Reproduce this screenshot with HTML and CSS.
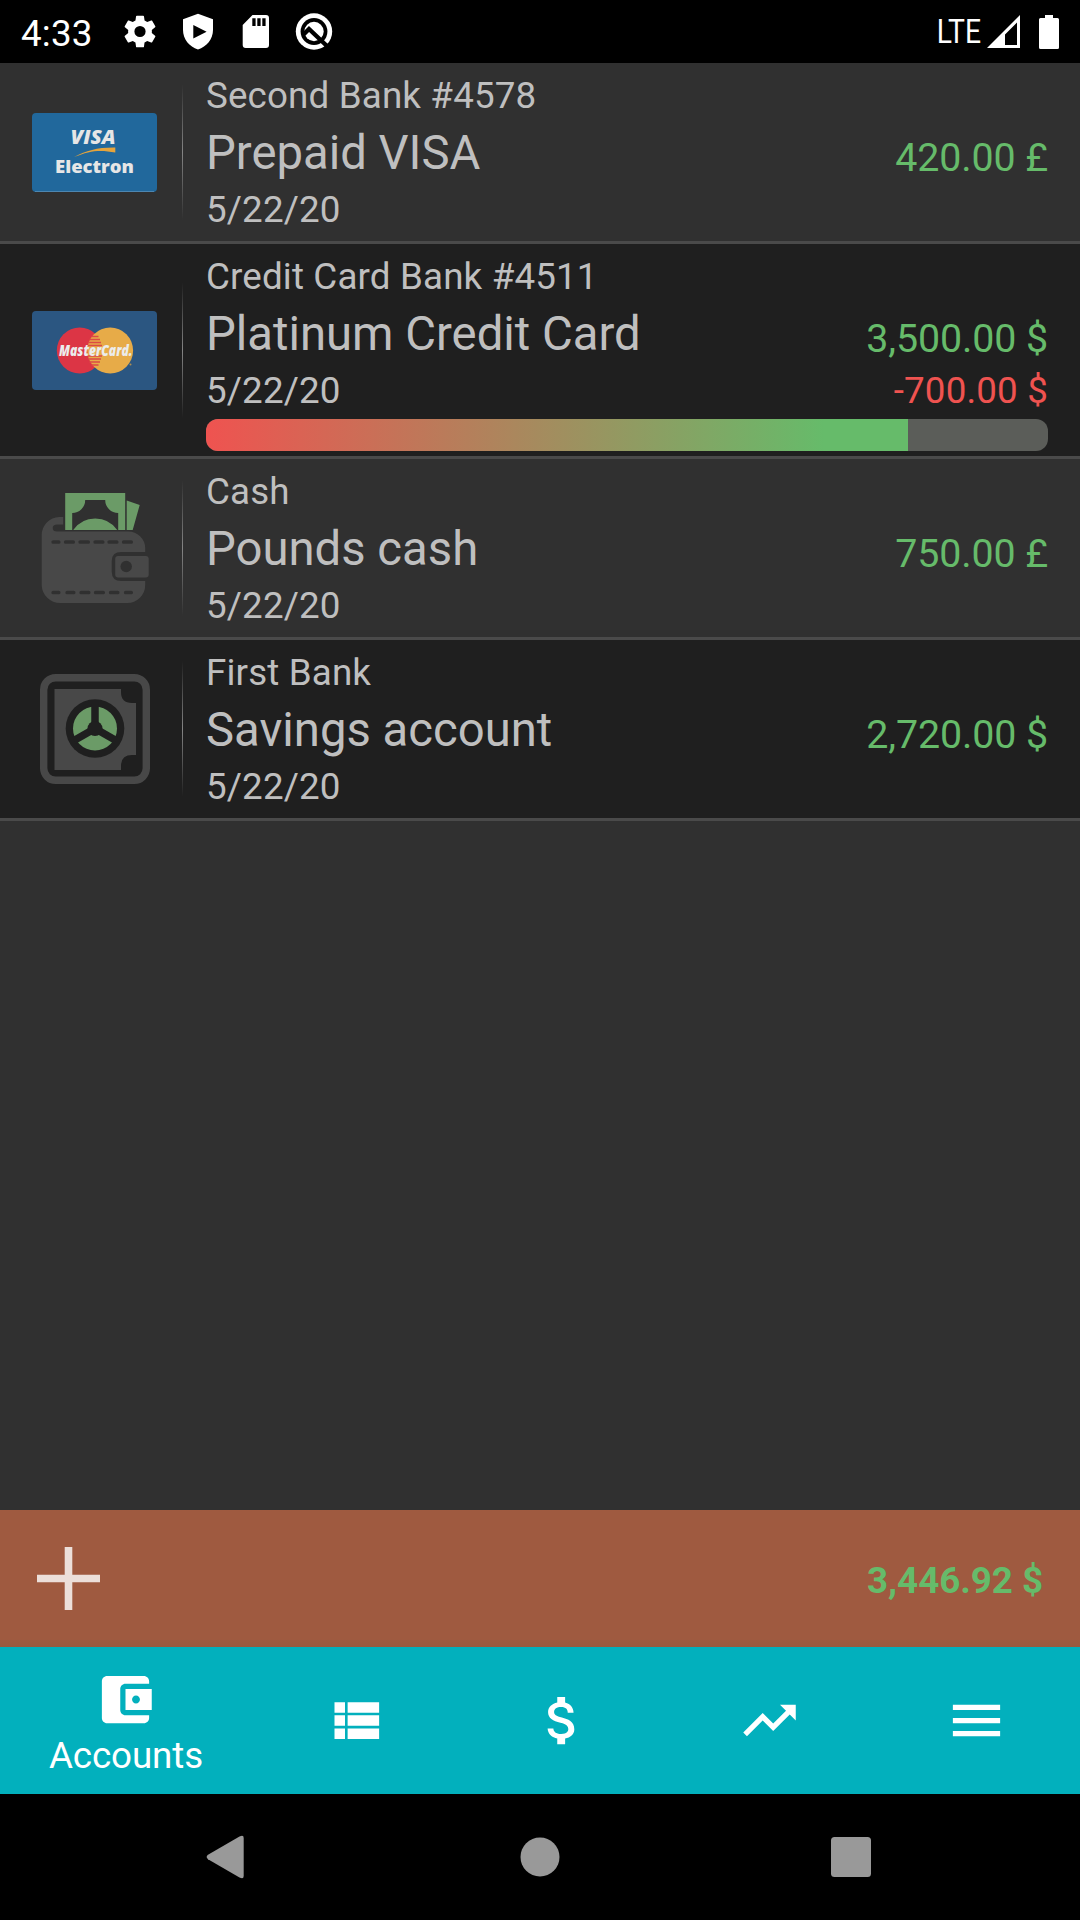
FILE: index.html
```html
<!DOCTYPE html>
<html lang="en">
<head>
<meta charset="utf-8">
<title>Accounts</title>
<link rel="stylesheet" href="styles.css">
</head>
<body>
<div class="screen">
  <header class="status">
    <span class="clock">4:33</span>
    <div class="status-icons">
      <svg viewBox="0 0 40 39"><path transform="translate(.2 -.3) scale(1.65)" d="M19.14 12.94c.04-.3.06-.61.06-.94 0-.32-.02-.64-.07-.94l2.03-1.58c.18-.14.23-.41.12-.61l-1.92-3.32c-.12-.22-.37-.29-.59-.22l-2.39.96c-.5-.38-1.03-.7-1.62-.94l-.36-2.54c-.04-.24-.24-.41-.48-.41h-3.84c-.24 0-.43.17-.47.41l-.36 2.54c-.59.24-1.13.57-1.62.94l-2.39-.96c-.22-.08-.47 0-.59.22L2.74 8.87c-.12.21-.08.47.12.61l2.03 1.58c-.05.3-.09.63-.09.94s.02.64.07.94l-2.03 1.58c-.18.14-.23.41-.12.61l1.92 3.32c.12.22.37.29.59.22l2.39-.96c.5.38 1.03.7 1.62.94l.36 2.54c.05.24.24.41.48.41h3.84c.24 0 .44-.17.47-.41l.36-2.54c.59-.24 1.13-.56 1.62-.94l2.39.96c.22.08.47 0 .59-.22l1.92-3.32c.12-.22.07-.47-.12-.61l-2.01-1.58zM12 15.4a3.4 3.4 0 1 1 0-6.8 3.4 3.4 0 0 1 0 6.8z"/></svg>
      <svg viewBox="0 0 40 39"><path fill-rule="evenodd" d="M20 1.8 35 7.2V18C35 27 28.600 34.900 20 37.500 11.400 34.900 5 27 5 18V7.200zM15.300 13v13.400L28.600 19.700z"/></svg>
      <svg viewBox="0 0 40 39"><path fill-rule="evenodd" d="M16.500 3H30Q33 3 33 6V33Q33 36 30 36H9.700Q6.700 36 6.700 33V13zM16.300 6.300v7.700h3.300V6.300zm5 0v7.700h3.300V6.300zm5 0v7.700h3.300V6.300z"/></svg>
      <svg viewBox="0 0 40 39"><circle cx="20" cy="19.500" r="18.200"/><circle cx="20" cy="19.500" r="13.400" fill="#000"/><circle cx="20" cy="19.500" r="9.700"/><path d="M9.500 22.500 15 17 33.500 34.500" fill="none" stroke="#000" stroke-width="4.400"/></svg>
    </div>
    <div class="status-right">
      <span class="lte">LTE</span>
      <svg class="signal" viewBox="0 0 33 33"><path fill-rule="evenodd" d="M33 0V33H0zM30 7.500 18 19.500V30H30z"/></svg>
      <svg class="battery" viewBox="0 0 20 34"><path d="M6 0h8v3h4.500q1.500 0 1.500 1.500v28q0 1.500-1.500 1.500h-17Q0 34 0 32.500v-28Q0 3 1.500 3H6z"/></svg>
    </div>
  </header>

  <main class="accounts">
    <article class="account">
      <div class="logo">
        <svg class="card" viewBox="0 0 125 79"><rect width="125" height="79" rx="4" fill="#21689c"/><path d="M3 78.500H122" stroke="#4d86b0" stroke-width="1"/><text class="visa" x="38.500" y="30.700" textLength="45" lengthAdjust="spacingAndGlyphs">VISA</text><path d="M42 44C55 37.500 65 34.300 83.300 34.500V39.500C68 36.500 58 37.500 42 44z" fill="#e5a43c"/><text class="electron" x="23" y="59.700" textLength="79" lengthAdjust="spacingAndGlyphs">Electron</text></svg>
      </div>
      <div class="divider"></div>
      <div class="info">
        <div class="bank">Second Bank #4578</div>
        <div class="name">Prepaid VISA</div><div class="amount">420.00 £</div>
        <div class="date">5/22/20</div>
      </div>
    </article>
    <article class="account">
      <div class="logo">
        <svg class="card" viewBox="0 0 125 79"><rect width="125" height="79" rx="4" fill="#2b5681"/><circle cx="47.700" cy="39.500" r="22.900" fill="#dc3545"/><circle cx="78.200" cy="39.500" r="22.900" fill="#e7ab48"/><path d="M59.500 25.500h7M57.500 28.500h10.500M56.500 31.500h12.500M56 34.500h14M56 45h14M56.500 48h12.500M57.500 51h10.500M59.500 54h7" stroke="#dc4b45" stroke-width="1.500"/><circle cx="98.500" cy="53.500" r="1" fill="#b08f50"/><text class="mc" x="27" y="45" textLength="73.500" lengthAdjust="spacingAndGlyphs">MasterCard.</text></svg>
      </div>
      <div class="divider"></div>
      <div class="info">
        <div class="bank">Credit Card Bank #4511</div>
        <div class="name">Platinum Credit Card</div><div class="amount">3,500.00 $</div>
        <div class="date">5/22/20</div><div class="debt">-700.00 $</div>
        <div class="meter"><div class="meter-fill" style="width: 83.37%"></div></div>
      </div>
    </article>
    <article class="account">
      <div class="logo">
        <svg class="glyph" viewBox="0 0 110 110">
          <g transform="translate(1.200 0)">
          <path fill="#484848" d="M22 24V31.500H16Q11.500 31.500 11.500 35T16 38.500H87A17 17 0 0 1 104 55V59H80Q70.500 59 70.500 68V78.500Q70.500 88 80 88H104V92A18 18 0 0 1 86 110H19A18.500 18.500 0 0 1 .5 92V42A18 18 0 0 1 18 24z"/>
          <path stroke="#303030" stroke-width="3.700" stroke-linecap="round" d="M12 49h5.500M24.500 49h7.500M39 49h8M54 49h7.500M68 49h7.500M82.500 49h7.500M12 99.500h5.500M26 99.500h6.500M40 99.500h7.500M54.500 99.500h7.500M69.500 99.500h7M84.500 99.500h5.500"/>
          <rect x="74" y="63" width="33.500" height="21.500" rx="3" fill="#484848"/><circle cx="85" cy="73.500" r="5.700" fill="#303030"/>
          <path fill="#6b9b67" fill-rule="evenodd" d="M24 0H84V37H24zM44 7A13 13 0 0 1 31 20V37H32Q40 25.500 54 25.500T76 37H77V20A13 13 0 0 1 64 7zM85.500 7.500 98.500 12 91.500 37H85.500z"/>
          </g>
        </svg>
      </div>
      <div class="divider"></div>
      <div class="info">
        <div class="bank">Cash</div>
        <div class="name">Pounds cash</div><div class="amount">750.00 £</div>
        <div class="date">5/22/20</div>
      </div>
    </article>
    <article class="account">
      <div class="logo">
        <svg class="glyph" viewBox="0 0 110 110">
          <rect x="3.700" y="3.700" width="102.600" height="102.600" rx="12" fill="none" stroke="#484848" stroke-width="7.400"/>
          <path fill="#484848" d="M14.500 15H81V18Q81 29 92 29H96V81H92Q81 81 81 92V96H14.500z"/>
          <circle cx="55" cy="54.500" r="29.300" fill="#1f1f1f"/><circle cx="55" cy="54.500" r="22" fill="#6b9b67"/>
          <path d="M55 54.500V30M55 54.500 34 66.500M55 54.500 76 66.500" stroke="#1f1f1f" stroke-width="7.500"/><circle cx="55" cy="54.500" r="7.500" fill="#1f1f1f"/>
        </svg>
      </div>
      <div class="divider"></div>
      <div class="info">
        <div class="bank">First Bank</div>
        <div class="name">Savings account</div><div class="amount">2,720.00 $</div>
        <div class="date">5/22/20</div>
      </div>
    </article>
  </main>

  <section class="total">
    <svg class="plus" viewBox="0 0 63 63"><path d="M27.700 0h7.600v27.700H63v7.600H35.300V63h-7.600V35.300H0v-7.600h27.700z"/></svg>
    <strong class="total-amount">3,446.92 $</strong>
  </section>

  <nav class="tabs">
    <a class="tab active"><svg viewBox="0 0 24 24"><path d="M21 18v1c0 1.100-.9 2-2 2H5c-1.110 0-2-.9-2-2V5c0-1.100.89-2 2-2h14c1.100 0 2 .9 2 2v1h-9c-1.110 0-2 .9-2 2v8c0 1.100.89 2 2 2h9zm-9-2h10V8H12v8zm4-2.500c-.83 0-1.500-.67-1.500-1.500s.67-1.500 1.500-1.500 1.500.67 1.500 1.500-.67 1.500-1.500 1.500z"/></svg><span>Accounts</span></a>
    <a class="tab"><svg viewBox="0 0 24 24"><path d="M4 14h4v-4H4v4zm0 5h4v-4H4v4zM4 9h4V5H4v4zm5 5h12v-4H9v4zm0 5h12v-4H9v4zM9 5v4h12V5H9z"/></svg></a>
    <a class="tab"><svg viewBox="0 0 24 24"><path d="M11.800 10.900c-2.270-.59-3-1.200-3-2.150 0-1.090 1.010-1.850 2.700-1.850 1.780 0 2.440.85 2.500 2.100h2.210c-.07-1.720-1.120-3.300-3.210-3.810V3h-3v2.160c-1.940.42-3.500 1.680-3.500 3.610 0 2.310 1.910 3.460 4.700 4.130 2.500.6 3 1.480 3 2.410 0 .69-.49 1.790-2.700 1.790-2.060 0-2.870-.92-2.980-2.100h-2.200c.12 2.190 1.760 3.420 3.680 3.830V21h3v-2.150c1.950-.37 3.500-1.500 3.500-3.550 0-2.840-2.430-3.810-4.700-4.400z"/></svg></a>
    <a class="tab"><svg viewBox="0 0 24 24"><path d="M16 6l2.290 2.290-4.880 4.880-4-4L2 16.590 3.410 18l6-6 4 4 6.300-6.290L22 12V6z"/></svg></a>
    <a class="tab"><svg viewBox="0 0 24 24"><path d="M3 18h18v-2H3v2zm0-5h18v-2H3v2zm0-7v2h18V6H3z"/></svg></a>
  </nav>

  <footer class="system">
    <svg viewBox="0 0 64 64"><path d="M11 29.800 42.500 11.600Q46.700 9.500 46.700 13V51Q46.700 54.500 42.500 52.400L11 34.200Q8.300 32 11 29.800z"/></svg>
    <svg viewBox="0 0 64 64"><circle cx="32" cy="32" r="19.500"/></svg>
    <svg viewBox="0 0 64 64"><rect x="12" y="12" width="40" height="40" rx="3.500"/></svg>
  </footer>
</div>
</body>
</html>
```
FILE: styles.css
```css
* { box-sizing: border-box; }
body { margin: 0; background: #303030; font-family: Roboto, "Liberation Sans", sans-serif; }
svg { display: block; }
.screen { width: 1080px; height: 1920px; display: flex; flex-direction: column; background: #303030; }

.status { height: 63px; flex: none; background: #000; color: #fff; display: flex; align-items: center; padding: 0 21px; }
.status svg { fill: #fff; }
.clock { width: 99px; font-size: 36.75px; line-height: 60px; padding-top: 4px; letter-spacing: .2px; }
.status-icons { display: flex; gap: 18px; }
.status-icons svg { width: 40px; height: 39px; }
.status-right { margin-left: auto; display: flex; align-items: center; }
.lte { font-size: 32.5px; line-height: 61px; padding-top: 1px; transform: scaleX(.87); transform-origin: right; margin-right: 6px; }
.signal { width: 33px; height: 33px; margin-right: 19px; }
.battery { width: 20px; height: 34px; }

.accounts { flex: 1; }
.account { display: flex; align-items: center; min-height: 181px; padding: 0 32px; background: #303030; border-bottom: 3px solid #4a4a4a; }
.account:nth-child(even) { background: #1f1f1f; }
.logo { width: 126px; flex: none; display: flex; justify-content: center; }
.card { width: 125px; height: 79px; margin-right: 1px; }
.glyph { width: 110px; height: 110px; overflow: visible; }
.divider { width: 1px; height: 136px; flex: none; margin: 0 23px 0 24px; background: linear-gradient(transparent, #858585, transparent); }
.info { flex: 1; align-self: stretch; display: grid; grid-template-columns: 1fr auto; align-content: start; padding: 8px 0 5px; color: #bfbfbf; }
.bank { grid-column: 1 / -1; }
.bank, .date, .debt { font-size: 36.75px; line-height: 49px; letter-spacing: .15px; }
.name { font-size: 47.25px; line-height: 63px; padding-top: 2px; }
.amount { font-size: 39.375px; line-height: 55px; padding-top: 10px; letter-spacing: -.1px; color: #66bb6a; }
.debt { color: #ef5350; text-align: right; }
.meter { grid-column: 1 / -1; height: 32px; margin-top: 4px; border-radius: 12px; overflow: hidden; background: #5b5d59; }
.meter-fill { height: 100%; background: linear-gradient(90deg, #ef5350, #66bb6a 88%); }

.visa { font: italic 800 18.500px "Open Sans", sans-serif; fill: #e6e6e6; }
.electron { font: 800 17.800px "Open Sans", sans-serif; fill: #e6e6e6; }
.mc { font: italic 800 15px "Open Sans", sans-serif; fill: #ececec; }

.total { height: 137px; flex: none; display: flex; align-items: center; justify-content: space-between; padding: 0 37px; background: linear-gradient(#9f5a40 94%, #985a3f); }
.plus { width: 63px; height: 63px; fill: #ecdfda; }
.total-amount { font-size: 36.75px; line-height: 49px; padding-top: 3px; letter-spacing: -.05px; color: #66bb6a; }

.tabs { height: 147px; flex: none; display: flex; background: #02b0bd; color: #fff; }
.tab { width: 207px; display: flex; flex-direction: column; align-items: center; justify-content: center; }
.tab svg { width: 63px; height: 63px; fill: #fff; }
.active { width: 252px; justify-content: flex-start; padding-top: 21px; }
.active svg { margin-right: 1px; }
.active span { font-size: 36.75px; line-height: 49px; letter-spacing: -.1px; }

.system { height: 126px; flex: none; display: flex; align-items: center; justify-content: space-between; padding: 0 197px; background: #000; }
.system svg { width: 64px; height: 64px; fill: #999; }
```
